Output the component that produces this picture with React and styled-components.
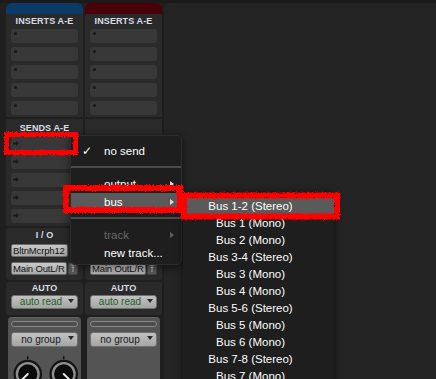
import React from "react";
import styled, { createGlobalStyle } from "styled-components";

const Global = createGlobalStyle`
  html, body { margin: 0; padding: 0; background: #202020; }
  body { font-family: "Liberation Sans", Arial, sans-serif; }
  #root { width: 436px; height: 379px; overflow: hidden; }
`;

const Page = styled.div`
  position: relative;
  width: 436px;
  height: 379px;
  overflow: hidden;
  background: #1e1e1e;
  display: flex;
  flex-direction: column;
`;

const TopStrip = styled.div`
  flex: none;
  height: 3px;
  background: #1a1a1a;
`;

const Workspace = styled.div`
  flex: 1;
  display: flex;
  min-height: 0;
`;

const Strip = styled.div`
  display: flex;
  gap: 2px;
  padding-left: 6px;
  background: #1f1f1f;
`;

const Canvas = styled.div`
  flex: 1;
  margin-left: 2px;
  background: #242424;
  border-top-left-radius: 6px;
`;

const Column = styled.div`
  width: 77px;
  display: flex;
  flex-direction: column;
  overflow: hidden;
  & > * { flex-shrink: 0; }
`;

const ColorCap = styled.div`
  height: 11px;
  border-radius: 6px 6px 0 0;
  background: ${(p) => p.$color};
`;

const Section = styled.div`
  margin-top: ${(p) => (p.$mt ?? 2)}px;
  padding: 0 5px ${(p) => p.$pb ?? 2}px;
  background: #2a2a2a;
  border-radius: ${(p) => p.$radius ?? 0}px;
  display: flex;
  flex-direction: column;
  gap: ${(p) => p.$gap ?? 4}px;
  & > * { flex-shrink: 0; }
`;

const Header = styled.div`
  height: ${(p) => p.$h ?? 15}px;
  line-height: ${(p) => p.$h ?? 15}px;
  margin-bottom: ${(p) => p.$mb ?? -4}px;
  text-align: center;
  font-size: 9px;
  font-weight: bold;
  color: #d8dee6;
  letter-spacing: 0.1px;
  white-space: nowrap;
`;

const Slot = styled.div`
  height: 14px;
  border-radius: 3px;
  background: #383838;
  display: flex;
  align-items: flex-start;
  padding: ${(p) => (p.$send ? "4px 0 0 2px" : "3px 0 0 3px")};
  box-sizing: border-box;
`;

const Dot = styled.span`
  width: 3px;
  height: 3px;
  border-radius: 50%;
  background: #181818;
`;

const SendArrow = () => (
  <svg width="6" height="5" viewBox="0 0 6 5">
    <path d="M0 1.6h3V0l3 2.5L3 5V3.4H0z" fill="#1b1b1b" />
  </svg>
);

const Row = styled.div`
  display: flex;
  gap: 1px;
  margin-top: ${(p) => p.$mt ?? 0}px;
  & > * { flex-shrink: 0; }
`;

const NameButton = styled.div`
  width: ${(p) => p.$w}px;
  height: 13px;
  box-sizing: border-box;
  border: 1px solid #6a6a6a;
  border-radius: 2px;
  background: linear-gradient(#c9c9c9, #a8a8a8);
  color: #111;
  font-size: 9.5px;
  letter-spacing: -0.15px;
  line-height: 11px;
  padding-left: 1px;
  white-space: nowrap;
  overflow: hidden;
`;

const PinButton = styled.div`
  width: 10px;
  height: 13px;
  box-sizing: border-box;
  border: 1px solid #444;
  border-radius: 2px;
  background: #585858;
  display: flex;
  justify-content: center;
  padding-top: 1px;
`;

const PinIcon = () => (
  <svg width="6" height="9" viewBox="0 0 6 9">
    <path d="M0.5 1h5M3 1v7M1.5 3.5h3" stroke="#b0b0b0" strokeWidth="1" fill="none" />
  </svg>
);

const Dropdown = styled.div`
  height: ${(p) => p.$h ?? 14}px;
  margin-top: ${(p) => p.$mt ?? 0}px;
  box-sizing: border-box;
  border: 1px solid #707070;
  border-radius: 3px;
  background: linear-gradient(#c2c2c2, #a5a5a5);
  display: flex;
  font-size: 10px;
  color: ${(p) => p.$color ?? "#161616"};
`;

const DropLabel = styled.span`
  flex: 1;
  text-align: center;
  line-height: ${(p) => (p.$h ?? 14) - 2}px;
  padding-left: 2px;
  white-space: nowrap;
`;

const Caret = styled.span`
  align-self: flex-start;
  margin: 3px 3px 0 0;
  width: 0;
  height: 0;
  border-left: 3.5px solid transparent;
  border-right: 3.5px solid transparent;
  border-top: 4px solid #2a2a2a;
`;

const GroupPanel = styled.div`
  margin: 2px 2px 0;
  padding: 4px 3px 0;
  flex: 1 0 auto;
  background: #545454;
  border-top: 1px solid #626262;
  border-radius: 4px 4px 0 0;
  display: flex;
  flex-direction: column;
  & > * { flex-shrink: 0; }
`;

const GroupBar = styled.div`
  height: 4px;
  border: 1px solid #8a8a8a;
  border-radius: 3px;
  background: #4d4d4d;
  margin-top: -1px;
`;

const Knobs = styled.div`
  display: flex;
  gap: 6px;
  padding-left: 2px;
  margin-top: 9px;
`;

const Knob = ({ dir }) => (
  <svg width="30" height="34" viewBox="0 0 30 34">
    <rect x="14.2" y="0" width="1.6" height="3" fill="#111" />
    <circle cx="15" cy="18" r="14.5" fill="#141414" />
    <circle cx="15" cy="18" r="11" fill="#0b0b0b" stroke="#909090" strokeWidth="2.4" />
    <line x1="15" y1="18" x2={15 + dir * 7.5} y2="25.5" stroke="#e8e8e8" strokeWidth="2" strokeLinecap="round" />
  </svg>
);

const Menu = styled.div`
  position: absolute;
  left: 70px;
  top: 135px;
  width: 112px;
  padding: 6px 0 2px;
  box-sizing: border-box;
  background: #1e1e1e;
  border: 1px solid #2c2c2c;
  border-radius: 5px;
  box-shadow: 0 2px 8px rgba(0, 0, 0, 0.55);
  font-size: 11.5px;
  z-index: 5;
`;

const MenuItem = styled.div`
  height: 18px;
  display: flex;
  align-items: center;
  padding-right: 7px;
  background: ${(p) => (p.$active ? "#5a5a5a" : "transparent")};
  color: ${(p) => (p.$disabled ? "#6a6a6a" : "#ffffff")};
`;

const Check = styled.span`
  width: 22px;
  margin-left: 11px;
  font-family: "DejaVu Sans", sans-serif;
  font-size: 12px;
  color: #fff;
`;

const ItemLabel = styled.span`
  flex: 1;
  white-space: nowrap;
`;

const SubArrow = styled.span`
  width: 0;
  height: 0;
  border-left: 4px solid ${(p) => (p.$disabled ? "#5e5e5e" : "#d8d8d8")};
  border-top: 3px solid transparent;
  border-bottom: 3px solid transparent;
`;

const Separator = styled.div`
  height: 2px;
  margin: ${(p) => p.$m};
  background: #4a4a4a;
`;

const SubMenu = styled.div`
  position: absolute;
  left: 183px;
  top: 193px;
  width: 151px;
  height: 200px;
  padding-top: 5px;
  box-sizing: border-box;
  background: #1e1e1e;
  box-shadow: 0 0 7px rgba(0, 0, 0, 0.6);
  font-size: 11.5px;
  z-index: 6;
`;

const SubItem = styled.div`
  height: 17px;
  line-height: 17px;
  text-align: center;
  padding-right: 16px;
  color: #fff;
  background: ${(p) => (p.$active ? "#5a5a5a" : "transparent")};
  white-space: nowrap;
`;

const Marks = styled.svg`
  position: absolute;
  left: 0;
  top: 0;
  pointer-events: none;
  z-index: 10;
`;

const buses = [
  "Bus 1-2 (Stereo)",
  "Bus 1 (Mono)",
  "Bus 2 (Mono)",
  "Bus 3-4 (Stereo)",
  "Bus 3 (Mono)",
  "Bus 4 (Mono)",
  "Bus 5-6 (Stereo)",
  "Bus 5 (Mono)",
  "Bus 6 (Mono)",
  "Bus 7-8 (Stereo)",
  "Bus 7 (Mono)",
];

const Track = ({ color, knobs, sendsHeader }) => (
  <Column>
    <ColorCap $color={color} />
    <Section $mt={0} $pb={2}>
      <Header>INSERTS A-E</Header>
      {[0, 1, 2, 3, 4].map((i) => (
        <Slot key={i}>
          <Dot />
        </Slot>
      ))}
    </Section>
    <Section $pb={3}>
      <Header $h={18}>{sendsHeader ? "SENDS A-E" : ""}</Header>
      {[0, 1, 2, 3, 4].map((i) => (
        <Slot key={i} $send>
          <SendArrow />
        </Slot>
      ))}
    </Section>
    <Section $pb={5} $gap={0} $radius={3}>
      <Header $mb={0}>I / O</Header>
      <Row $mt={1}>
        <NameButton $w={57}>BltnMcrph12</NameButton>
      </Row>
      <Row $mt={5}>
        <NameButton $w={56}>Main OutL/R</NameButton>
        <PinButton>
          <PinIcon />
        </PinButton>
      </Row>
    </Section>
    <Section $pb={6} $gap={0} $radius={3}>
      <Header $h={13} $mb={0}>AUTO</Header>
      <Dropdown $color="#1b5d1b">
        <DropLabel>auto read</DropLabel>
        <Caret />
      </Dropdown>
    </Section>
    <GroupPanel>
      <GroupBar />
      <Dropdown $h={15} $mt={5}>
        <DropLabel $h={15}>no group</DropLabel>
        <Caret />
      </Dropdown>
      {knobs && (
        <Knobs>
          <Knob dir={-1} />
          <Knob dir={1} />
        </Knobs>
      )}
    </GroupPanel>
  </Column>
);

export default function App() {
  return (
    <>
      <Global />
      <Page>
        <TopStrip />
        <Workspace>
          <Strip>
            <Track color="#0c3a66" knobs sendsHeader />
            <Track color="#4a0008" />
          </Strip>
          <Canvas />
        </Workspace>

        <Menu>
          <MenuItem>
            <Check>✓</Check>
            <ItemLabel>no send</ItemLabel>
          </MenuItem>
          <Separator $m="6px 0 7px" />
          <MenuItem>
            <Check />
            <ItemLabel>output</ItemLabel>
            <SubArrow />
          </MenuItem>
          <MenuItem $active>
            <Check />
            <ItemLabel>bus</ItemLabel>
            <SubArrow />
          </MenuItem>
          <Separator $m="6px 0 7px" />
          <MenuItem $disabled>
            <Check />
            <ItemLabel>track</ItemLabel>
            <SubArrow $disabled />
          </MenuItem>
          <MenuItem>
            <Check />
            <ItemLabel>new track...</ItemLabel>
          </MenuItem>
        </Menu>

        <SubMenu>
          {buses.map((b, i) => (
            <SubItem key={b} $active={i === 0}>
              {b}
            </SubItem>
          ))}
        </SubMenu>

        <Marks width="436" height="379" viewBox="0 0 436 379">
          <defs>
            <filter id="rough" x="-10%" y="-30%" width="120%" height="160%">
              <feTurbulence type="fractalNoise" baseFrequency="0.9" numOctaves="2" seed="3" result="n" />
              <feDisplacementMap in="SourceGraphic" in2="n" scale="3.5" />
            </filter>
          </defs>
          <g fill="none" stroke="#ff0000" filter="url(#rough)">
            <rect x="6.5" y="134.5" width="69" height="18" strokeWidth="5" />
            <rect x="66" y="188" width="114" height="22" strokeWidth="6" />
            <rect x="184" y="195.5" width="153" height="21" strokeWidth="6" />
          </g>
        </Marks>
      </Page>
    </>
  );
}
